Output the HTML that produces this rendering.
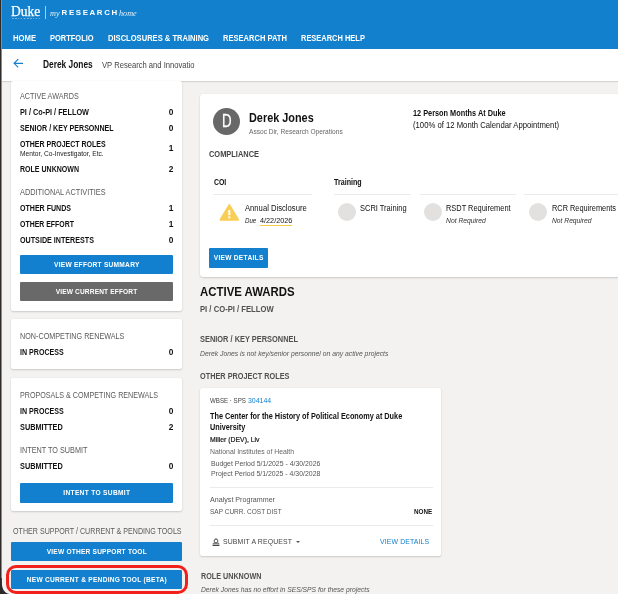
<!DOCTYPE html>
<html><head><meta charset="utf-8"><title>myRESEARCHhome</title>
<style>
*{box-sizing:border-box;margin:0;padding:0}
html,body{width:618px;height:594px;overflow:hidden;background:#f3f2f1}
body{position:relative;font-family:"Liberation Sans",Arial,sans-serif;color:#111}
.a{position:absolute;white-space:nowrap}
.t{position:absolute;white-space:nowrap;line-height:12px;height:12px;transform-origin:0 50%}
.card{position:absolute;background:#fff;border-radius:2px;box-shadow:0 1px 2px rgba(0,0,0,.16),0 0 1px rgba(0,0,0,.08)}
.btn{position:absolute;background:#1280ce;border-radius:1px}
.hr{position:absolute;height:1px;background:#ebebeb}
.circ{position:absolute;width:18px;height:18px;border-radius:50%;background:#e3e1df}
</style></head><body>

<!-- top blue header -->
<div class="a" style="left:0;top:0;width:618px;height:48.5px;background:#1280cd"></div>
<div class="a" style="left:45px;top:5.5px;width:1px;height:13.5px;background:#a9cdee"></div>

<!-- sub header -->
<div class="a" style="left:0;top:48.5px;width:618px;height:32px;background:#fff;box-shadow:0 1px 1px rgba(0,0,0,.12)"></div>
<svg class="a" style="left:13px;top:58px" width="11" height="11" viewBox="0 0 11 11"><path d="M10 5.3H1.6M5.2 1.2L1.1 5.3l4.1 4.1" fill="none" stroke="#1280cd" stroke-width="1.15"/></svg>

<!-- sidebar cards -->
<div class="card" style="left:11px;top:81px;width:171px;height:230px"></div>
<div class="btn" style="left:20.3px;top:254.6px;width:153px;height:19.8px"></div>
<div class="btn" style="left:20.3px;top:281.5px;width:153px;height:19.5px;background:#696969"></div>
<div class="card" style="left:11px;top:319px;width:171px;height:50.400px"></div>
<div class="card" style="left:11px;top:378px;width:171px;height:133.300px"></div>
<div class="btn" style="left:20.3px;top:483.3px;width:153px;height:19.4px"></div>
<div class="btn" style="left:11px;top:541.700px;width:171px;height:19.300px"></div>
<div class="btn" style="left:11px;top:570px;width:171px;height:19px"></div>
<div class="a" style="left:5.7px;top:565px;width:182.3px;height:29.4px;border:3.3px solid #f2201a;border-radius:10px"></div>

<!-- main card -->
<div class="card" style="left:200px;top:94px;width:430px;height:182.6px;border-radius:3px"></div>
<div class="a" style="left:213.3px;top:107.7px;width:27px;height:27px;border-radius:50%;background:#686868"></div>
<div class="hr" style="left:213.3px;top:194.2px;width:98.4px"></div>
<div class="hr" style="left:334.3px;top:194.2px;width:76.7px"></div>
<div class="hr" style="left:420.2px;top:194.2px;width:95.4px"></div>
<div class="hr" style="left:524.3px;top:194.2px;width:100px"></div>
<svg class="a" style="left:218.800px;top:202.700px" width="21" height="19" viewBox="0 0 21 19"><path d="M10.300 2L19.200 16.800H1.400z" fill="#f9ce56" stroke="#f9ce56" stroke-width="1.800" stroke-linejoin="round"/><rect x="9.300" y="7" width="2" height="5.200" fill="#fff"/><rect x="9.300" y="13.400" width="2" height="1.900" fill="#fff"/></svg>
<div class="circ" style="left:337.8px;top:203.3px"></div>
<div class="circ" style="left:424.1px;top:203.4px"></div>
<div class="circ" style="left:528.6px;top:203.4px"></div>
<div class="btn" style="left:209.3px;top:248px;width:58.4px;height:19.7px"></div>

<!-- project card -->
<div class="card" style="left:200px;top:388px;width:241.2px;height:167.500px"></div>
<div class="hr" style="left:209.7px;top:486.6px;width:223.3px"></div>
<div class="hr" style="left:209.7px;top:524.7px;width:223.3px"></div>
<svg class="a" style="left:212px;top:537.800px" width="8" height="8.400" viewBox="0 0 8 8.400"><circle cx="4" cy="3" r="1.900" fill="none" stroke="#444" stroke-width=".9"/><path d="M4 .3v.8" stroke="#444" stroke-width=".9"/><path d="M1.200 6.300V5.300h5.600v1" fill="none" stroke="#444" stroke-width=".8"/><path d="M.6 7.400h6.800" stroke="#444" stroke-width="1.500"/></svg>
<div class="a" style="left:295.6px;top:540.6px;width:0;height:0;border-left:2.1px solid transparent;border-right:2.1px solid transparent;border-top:2.6px solid #555"></div>

<div id="tx" style="position:absolute;left:0;top:0;width:618px;height:594px;will-change:transform">
<div class="t" style="left:11.3px;top:6.00px;font-size:13.8px;color:#fff;-webkit-text-stroke:0.25px #fff;font-family:'Liberation Serif',serif;transform:scaleX(0.9802);">Duke</div>
<div class="t" style="left:11.9px;top:13.20px;font-size:2.4px;color:#d6e8f8;font-weight:bold;letter-spacing:1.538px;">UNIVERSITY</div>
<div class="t" style="left:49.9px;top:6.70px;font-size:8.99px;color:#e4f0fb;font-style:italic;font-family:'Liberation Serif',serif;transform:scaleX(0.9156);">my</div>
<div class="t" style="left:61.6px;top:7.08px;font-size:7.92px;color:#fff;font-weight:bold;letter-spacing:1.604px;">RESEARCH</div>
<div class="t" style="left:119.0px;top:6.70px;font-size:8.99px;color:#e4f0fb;font-style:italic;font-family:'Liberation Serif',serif;transform:scaleX(0.9091);">home</div>
<div class="t" style="left:13.3px;top:32.30px;font-size:9.2px;color:#fff;font-weight:bold;transform:scaleX(0.8381);">HOME</div>
<div class="t" style="left:50.2px;top:32.30px;font-size:9.2px;color:#fff;font-weight:bold;transform:scaleX(0.8135);">PORTFOLIO</div>
<div class="t" style="left:108.2px;top:32.30px;font-size:9.2px;color:#fff;font-weight:bold;transform:scaleX(0.8244);">DISCLOSURES &amp; TRAINING</div>
<div class="t" style="left:223.2px;top:32.30px;font-size:9.2px;color:#fff;font-weight:bold;transform:scaleX(0.8217);">RESEARCH PATH</div>
<div class="t" style="left:301.2px;top:32.30px;font-size:9.2px;color:#fff;font-weight:bold;transform:scaleX(0.8127);">RESEARCH HELP</div>
<div class="t" style="left:42.6px;top:58.96px;font-size:10.27px;color:#111;font-weight:bold;transform:scaleX(0.8139);">Derek Jones</div>
<div class="t" style="left:101.6px;top:58.50px;font-size:8.77px;color:#444;transform:scaleX(0.8690);">VP Research and Innovatio</div>
<div class="t" style="left:20.3px;top:90.00px;font-size:8.35px;color:#5a5a5a;transform:scaleX(0.8632);">ACTIVE AWARDS</div>
<div class="t" style="left:20.3px;top:106.00px;font-size:8.35px;color:#111;font-weight:bold;transform:scaleX(0.8755);">PI / Co-PI / FELLOW</div>
<div class="t" style="left:20.3px;top:122.30px;font-size:8.35px;color:#111;font-weight:bold;transform:scaleX(0.8502);">SENIOR / KEY PERSONNEL</div>
<div class="t" style="left:20.3px;top:138.00px;font-size:8.35px;color:#111;font-weight:bold;transform:scaleX(0.8402);">OTHER PROJECT ROLES</div>
<div class="t" style="left:20.3px;top:147.70px;font-size:7.06px;color:#222;transform:scaleX(0.9413);">Mentor, Co-Investigator, Etc.</div>
<div class="t" style="left:20.3px;top:162.60px;font-size:8.35px;color:#111;font-weight:bold;transform:scaleX(0.8429);">ROLE UNKNOWN</div>
<div class="t" style="left:20.3px;top:185.70px;font-size:8.35px;color:#5a5a5a;transform:scaleX(0.8829);">ADDITIONAL ACTIVITIES</div>
<div class="t" style="left:20.3px;top:201.50px;font-size:8.35px;color:#111;font-weight:bold;transform:scaleX(0.8463);">OTHER FUNDS</div>
<div class="t" style="left:20.3px;top:217.70px;font-size:8.35px;color:#111;font-weight:bold;transform:scaleX(0.8320);">OTHER EFFORT</div>
<div class="t" style="left:20.3px;top:234.00px;font-size:8.35px;color:#111;font-weight:bold;transform:scaleX(0.8581);">OUTSIDE INTERESTS</div>
<div class="t" style="left:20.3px;top:329.70px;font-size:8.35px;color:#5a5a5a;transform:scaleX(0.8650);">NON-COMPETING RENEWALS</div>
<div class="t" style="left:20.3px;top:346.00px;font-size:8.35px;color:#111;font-weight:bold;transform:scaleX(0.8491);">IN PROCESS</div>
<div class="t" style="left:20.3px;top:388.70px;font-size:8.35px;color:#5a5a5a;transform:scaleX(0.8569);">PROPOSALS &amp; COMPETING RENEWALS</div>
<div class="t" style="left:20.3px;top:405.00px;font-size:8.35px;color:#111;font-weight:bold;transform:scaleX(0.8491);">IN PROCESS</div>
<div class="t" style="left:20.3px;top:420.70px;font-size:8.35px;color:#111;font-weight:bold;transform:scaleX(0.8773);">SUBMITTED</div>
<div class="t" style="left:20.3px;top:443.70px;font-size:8.35px;color:#5a5a5a;transform:scaleX(0.8706);">INTENT TO SUBMIT</div>
<div class="t" style="left:20.3px;top:460.00px;font-size:8.35px;color:#111;font-weight:bold;transform:scaleX(0.8773);">SUBMITTED</div>
<div class="t" style="left:12.7px;top:524.70px;font-size:8.35px;color:#5a5a5a;transform:scaleX(0.8529);">OTHER SUPPORT / CURRENT &amp; PENDING TOOLS</div>
<div class="t" style="left:153.3px;width:20px;text-align:right;top:106.00px;font-size:8.35px;color:#111;font-weight:bold;">0</div>
<div class="t" style="left:153.3px;width:20px;text-align:right;top:122.30px;font-size:8.35px;color:#111;font-weight:bold;">0</div>
<div class="t" style="left:153.3px;width:20px;text-align:right;top:142.30px;font-size:8.35px;color:#111;font-weight:bold;">1</div>
<div class="t" style="left:153.3px;width:20px;text-align:right;top:162.60px;font-size:8.35px;color:#111;font-weight:bold;">2</div>
<div class="t" style="left:153.3px;width:20px;text-align:right;top:201.50px;font-size:8.35px;color:#111;font-weight:bold;">1</div>
<div class="t" style="left:153.3px;width:20px;text-align:right;top:217.70px;font-size:8.35px;color:#111;font-weight:bold;">1</div>
<div class="t" style="left:153.3px;width:20px;text-align:right;top:234.00px;font-size:8.35px;color:#111;font-weight:bold;">0</div>
<div class="t" style="left:153.3px;width:20px;text-align:right;top:346.00px;font-size:8.35px;color:#111;font-weight:bold;">0</div>
<div class="t" style="left:153.3px;width:20px;text-align:right;top:405.00px;font-size:8.35px;color:#111;font-weight:bold;">0</div>
<div class="t" style="left:153.3px;width:20px;text-align:right;top:420.70px;font-size:8.35px;color:#111;font-weight:bold;">2</div>
<div class="t" style="left:153.3px;width:20px;text-align:right;top:460.00px;font-size:8.35px;color:#111;font-weight:bold;">0</div>
<div class="t" style="left:54.0px;top:258.50px;font-size:6.6px;color:#fff;font-weight:bold;letter-spacing:0.255px;">VIEW EFFORT SUMMARY</div>
<div class="t" style="left:55.7px;top:285.72px;font-size:6.6px;color:#fff;font-weight:bold;letter-spacing:0.138px;">VIEW CURRENT EFFORT</div>
<div class="t" style="left:63.3px;top:487.00px;font-size:6.6px;color:#fff;font-weight:bold;letter-spacing:0.327px;">INTENT TO SUBMIT</div>
<div class="t" style="left:46.7px;top:545.73px;font-size:6.6px;color:#fff;font-weight:bold;letter-spacing:0.205px;">VIEW OTHER SUPPORT TOOL</div>
<div class="t" style="left:26.7px;top:573.70px;font-size:6.6px;color:#fff;font-weight:bold;letter-spacing:0.265px;">NEW CURRENT &amp; PENDING TOOL (BETA)</div>
<div class="t" style="left:213.7px;top:251.80px;font-size:6.6px;color:#fff;font-weight:bold;letter-spacing:0.290px;">VIEW DETAILS</div>
<div class="t" style="left:222.2px;top:115.00px;font-size:17.6px;color:#fff;-webkit-text-stroke:0.3px #fff;transform:scaleX(0.7548);">D</div>
<div class="t" style="left:249.3px;top:112.11px;font-size:12.6px;color:#111;font-weight:bold;transform:scaleX(0.8637);">Derek Jones</div>
<div class="t" style="left:249.3px;top:126.00px;font-size:7.06px;color:#666;transform:scaleX(0.9345);">Assoc Dir, Research Operations</div>
<div class="t" style="left:412.5px;top:108.49px;font-size:8.13px;color:#111;font-weight:bold;transform:scaleX(0.9022);">12 Person Months At Duke</div>
<div class="t" style="left:412.5px;top:119.30px;font-size:8.35px;color:#111;transform:scaleX(0.9237);">(100% of 12 Month Calendar Appointment)</div>
<div class="t" style="left:209.3px;top:149.49px;font-size:8.13px;color:#444;font-weight:bold;transform:scaleX(0.9153);">COMPLIANCE</div>
<div class="t" style="left:213.7px;top:176.79px;font-size:8.13px;color:#111;font-weight:bold;transform:scaleX(0.8510);">COI</div>
<div class="t" style="left:334.3px;top:176.79px;font-size:8.13px;color:#111;font-weight:bold;transform:scaleX(0.8763);">Training</div>
<div class="t" style="left:245.0px;top:201.70px;font-size:8.35px;color:#111;transform:scaleX(0.9175);">Annual Disclosure</div>
<div class="t" style="left:245.0px;top:214.90px;font-size:7.49px;color:#222;font-style:italic;transform:scaleX(0.8228);">Due</div>
<div class="t" style="left:259.7px;top:214.90px;font-size:7.49px;color:#111;border-bottom:1.2px solid #f6cb4a;height:11.2px;transform:scaleX(0.9701);">4/22/2026</div>
<div class="t" style="left:360.3px;top:201.70px;font-size:8.35px;color:#111;transform:scaleX(0.8972);">SCRI Training</div>
<div class="t" style="left:446.4px;top:201.70px;font-size:8.35px;color:#111;transform:scaleX(0.8891);">RSDT Requirement</div>
<div class="t" style="left:446.4px;top:214.72px;font-size:7.28px;color:#333;font-style:italic;transform:scaleX(0.9296);">Not Required</div>
<div class="t" style="left:551.6px;top:201.70px;font-size:8.35px;color:#111;transform:scaleX(0.8847);">RCR Requirements</div>
<div class="t" style="left:551.6px;top:214.73px;font-size:7.28px;color:#333;font-style:italic;transform:scaleX(0.9226);">Not Required</div>
<div class="t" style="left:200.3px;top:285.94px;font-size:12.2px;color:#111;font-weight:bold;transform:scaleX(0.9365);">ACTIVE AWARDS</div>
<div class="t" style="left:200.3px;top:304.31px;font-size:8.13px;color:#505050;font-weight:bold;transform:scaleX(0.9437);">PI / CO-PI / FELLOW</div>
<div class="t" style="left:200.3px;top:333.83px;font-size:8.13px;color:#505050;font-weight:bold;transform:scaleX(0.9132);">SENIOR / KEY PERSONNEL</div>
<div class="t" style="left:200.3px;top:347.92px;font-size:6.96px;color:#555;font-style:italic;transform:scaleX(0.9769);">Derek Jones is not key/senior personnel on any active projects</div>
<div class="t" style="left:200.3px;top:370.79px;font-size:8.13px;color:#505050;font-weight:bold;transform:scaleX(0.9000);">OTHER PROJECT ROLES</div>
<div class="t" style="left:200.6px;top:571.14px;font-size:8.13px;color:#505050;font-weight:bold;transform:scaleX(0.8862);">ROLE UNKNOWN</div>
<div class="t" style="left:200.6px;top:584.08px;font-size:6.96px;color:#555;font-style:italic;transform:scaleX(0.9694);">Derek Jones has no effort in SES/SPS for these projects</div>
<div class="t" style="left:209.7px;top:394.70px;font-size:7.28px;color:#444;transform:scaleX(0.8466);">WBSE · SPS</div>
<div class="t" style="left:248.2px;top:394.70px;font-size:7.28px;color:#1280cd;transform:scaleX(0.9567);">304144</div>
<div class="t" style="left:209.7px;top:410.10px;font-size:8.35px;color:#111;font-weight:bold;transform:scaleX(0.8746);">The Center for the History of Political Economy at Duke</div>
<div class="t" style="left:209.7px;top:421.30px;font-size:8.35px;color:#111;font-weight:bold;transform:scaleX(0.8722);">University</div>
<div class="t" style="left:209.5px;top:433.90px;font-size:7.92px;color:#111;-webkit-text-stroke:0.2px #111;transform:scaleX(0.8668);">Miller (DEV), Liv</div>
<div class="t" style="left:209.7px;top:445.90px;font-size:7.38px;color:#666;transform:scaleX(0.9323);">National Institutes of Health</div>
<div class="t" style="left:210.9px;top:457.90px;font-size:7.38px;color:#555;transform:scaleX(0.9360);">Budget Period 5/1/2025 - 4/30/2026</div>
<div class="t" style="left:210.9px;top:467.72px;font-size:7.38px;color:#555;transform:scaleX(0.9394);">Project Period 5/1/2025 - 4/30/2028</div>
<div class="t" style="left:209.7px;top:493.50px;font-size:7.38px;color:#555;transform:scaleX(0.9670);">Analyst Programmer</div>
<div class="t" style="left:209.7px;top:506.00px;font-size:7.38px;color:#555;transform:scaleX(0.8809);">SAP CURR. COST DIST</div>
<div class="t" style="left:414.3px;top:506.00px;font-size:7.38px;color:#111;font-weight:bold;transform:scaleX(0.8540);">NONE</div>
<div class="t" style="left:222.9px;top:535.80px;font-size:6.9px;color:#444;letter-spacing:0.154px;">SUBMIT A REQUEST</div>
<div class="t" style="left:379.9px;top:535.80px;font-size:6.9px;color:#1280cd;letter-spacing:0.142px;">VIEW DETAILS</div>
</div>

<!-- left dark edge / window corner -->
<div class="a" style="left:0;top:0;width:1px;height:594px;background:#2e2b29"></div><div class="a" style="left:1px;top:0;width:1px;height:594px;background:#8d8a88"></div>
<svg class="a" style="left:0;top:578px" width="12" height="16" viewBox="0 0 12 16"><path d="M0 0h1.800v4c0 7 2.500 11 7.500 12H0z" fill="#2b2928"/></svg>
</body></html>
